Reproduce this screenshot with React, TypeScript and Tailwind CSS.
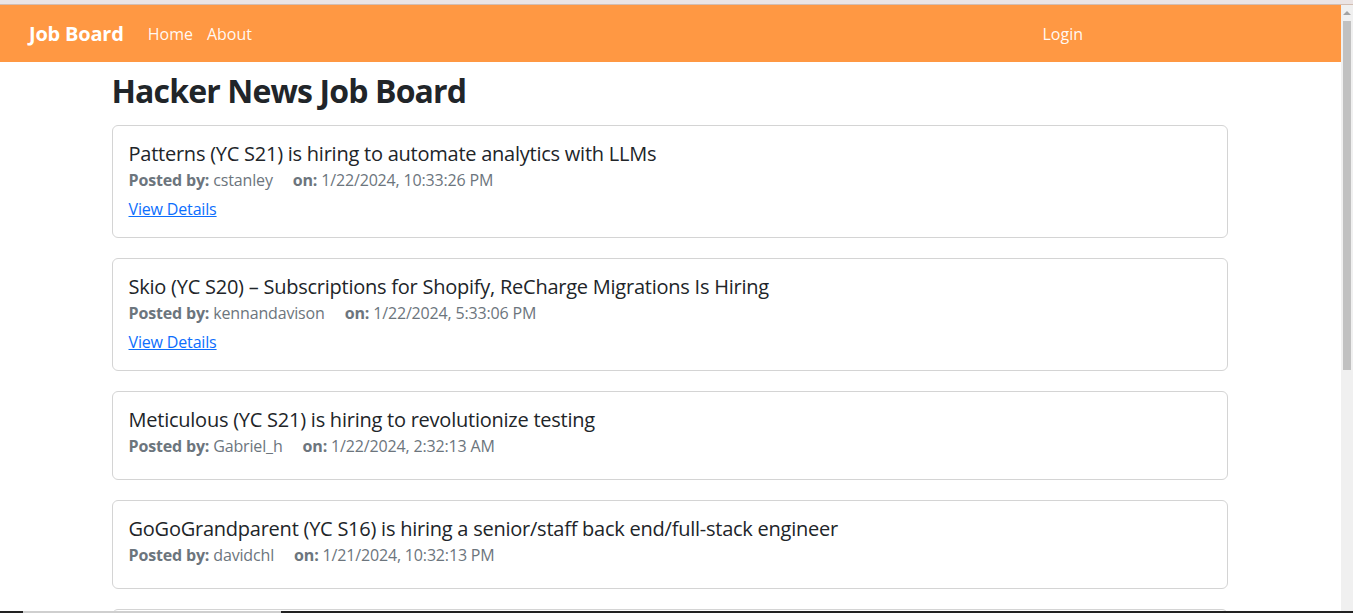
import React from "react";

type Job = {
  id: number;
  title: string;
  by: string;
  time: string;
  hasLink?: boolean;
};

const jobs: Job[] = [
  {
    id: 1,
    title: "Patterns (YC S21) is hiring to automate analytics with LLMs",
    by: "cstanley",
    time: "1/22/2024, 10:33:26 PM",
    hasLink: true,
  },
  {
    id: 2,
    title: "Skio (YC S20) – Subscriptions for Shopify, ReCharge Migrations Is Hiring",
    by: "kennandavison",
    time: "1/22/2024, 5:33:06 PM",
    hasLink: true,
  },
  {
    id: 3,
    title: "Meticulous (YC S21) is hiring to revolutionize testing",
    by: "Gabriel_h",
    time: "1/22/2024, 2:32:13 AM",
  },
  {
    id: 4,
    title: "GoGoGrandparent (YC S16) is hiring a senior/staff back end/full-stack engineer",
    by: "davidchl",
    time: "1/21/2024, 10:32:13 PM",
  },
];

function JobCard({ job }: { job: Job }) {
  return (
    <div className="mb-5 rounded-[6px] border border-[#d4d4d4] bg-white px-4 pt-4 pb-4">
      <h5 className="mb-[2px] text-[20px] leading-[24px] font-normal tracking-[-0.012em] text-[#212529]">
        {job.title}
      </h5>
      <p className="mb-[5px] text-[16px] leading-[24px] tracking-[-0.01em] text-[#6c757d]">
        <span className="font-bold">Posted by:</span> {job.by}
        <span className="ml-[20px] font-bold">on:</span> {job.time}
      </p>
      {job.hasLink && (
        <a href="#" className="text-[16px] leading-[24px] tracking-[-0.01em] text-[#0d6efd] underline">
          View Details
        </a>
      )}
    </div>
  );
}

export default function App() {
  return (
    <div
      className="relative h-[613px] overflow-hidden bg-white"
      style={{ fontFamily: '"Open Sans", "Noto Sans", sans-serif' }}
    >
      {/* browser chrome strip */}
      <div className="h-[5px] border-b border-[#d2bdb2] bg-[#ebe4e4]" />

      <div className="flex h-[608px]">
        <div className="flex-1 overflow-hidden">
          {/* navbar */}
          <nav className="flex h-[57px] items-center bg-[#ff9843] pl-[29px] text-white">
            <a href="#" className="mr-[24px] text-[20px] font-bold tracking-[-0.01em]">
              Job Board
            </a>
            <a href="#" className="mr-[14px] text-[16px] text-white/95">
              Home
            </a>
            <a href="#" className="text-[16px] text-white/95">
              About
            </a>
            <a href="#" className="ml-auto mr-[258px] text-[16px] text-white/95">
              Login
            </a>
          </nav>

          {/* content */}
          <div className="mx-auto w-[1116px] -translate-x-[1px]">
            <h2 className="mt-[10px] mb-[15px] text-[32px] leading-[38px] font-bold tracking-[-0.027em] text-[#212529]">
              Hacker News Job Board
            </h2>
            {jobs.map((job) => (
              <JobCard key={job.id} job={job} />
            ))}
            <div className="h-[88px] rounded-[6px] border border-[#d4d4d4] bg-white" />
          </div>
        </div>

        {/* scrollbar */}
        <div className="flex w-[12px] flex-col items-center bg-[#f0f0f0]">
          <svg width="12" height="16" viewBox="0 0 12 16" className="shrink-0">
            <path d="M2 10 L6 6 L10 10 Z" fill="#a3a3a3" />
          </svg>
          <div className="h-[349px] w-[8px] bg-[#c1c1c1]" />
        </div>
      </div>

      {/* taskbar edge */}
      <div className="absolute bottom-0 left-0 flex h-[2px] w-full">
        <div className="w-[23px] bg-[#222]" />
        <div className="w-[258px] bg-[#cfcfcf]" />
        <div className="flex-1 bg-[#222]" />
      </div>
    </div>
  );
}
